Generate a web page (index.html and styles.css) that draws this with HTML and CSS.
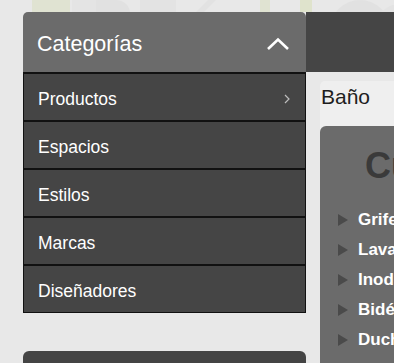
FILE: index.html
```html
<!DOCTYPE html>
<html lang="es">
<head>
<meta charset="utf-8">
<title>Categorías</title>
<link rel="stylesheet" href="styles.css">
</head>
<body>
<div class="banner">
  <svg class="banner-art" width="394" height="12" viewBox="0 0 394 12" aria-hidden="true">
    <rect x="32" y="0" width="38" height="12" fill="#e0e3d2"/>
    <rect x="72" y="0" width="24" height="12" fill="#e4e4e4"/>
    <path d="M96 0 h20 a14 14 0 0 1 14 12 h-34z" fill="#e1e1e1"/>
    <rect x="140" y="0" width="36" height="12" fill="#e3e3e3"/>
    <path d="M196 12 L208 0 h8 L204 12z" fill="#e2e2e2"/>
    <rect x="260" y="0" width="10" height="12" fill="#e0e3d2"/>
    <rect x="300" y="0" width="12" height="12" fill="#dfe3cc"/>
    <circle cx="360" cy="30" r="30" fill="#e1e1e1"/>
    <circle cx="400" cy="30" r="26" fill="#e3e3e3"/>
  </svg>
</div>
<div class="layout">
  <aside class="sidebar">
    <section class="cat-panel">
      <header class="cat-header">
        <span class="cat-title">Categorías</span>
        <svg class="chev-up" width="24" height="14" viewBox="0 0 24 14" aria-hidden="true">
          <path d="M2 12 L12 2.5 L22 12" fill="none" stroke="#fff" stroke-width="2.6"/>
        </svg>
      </header>
      <ul class="cat-list">
        <li class="cat-item"><span>Productos</span>
          <svg class="chev-right" width="6" height="10" viewBox="0 0 6 10" aria-hidden="true"><path d="M1 1 L5 5 L1 9" fill="none" stroke="#bdbdbd" stroke-width="1.2"/></svg>
        </li>
        <li class="cat-item"><span>Espacios</span></li>
        <li class="cat-item"><span>Estilos</span></li>
        <li class="cat-item"><span>Marcas</span></li>
        <li class="cat-item"><span>Diseñadores</span></li>
      </ul>
    </section>
    <section class="next-panel"></section>
  </aside>
  <main class="main">
    <div class="topbar"></div>
    <div class="content">
      <div class="crumb">Baño</div>
      <div class="card">
        <h2 class="card-title">Cuarto de baño</h2>
        <ul class="card-list">
          <li>Grifería</li>
          <li>Lavabos</li>
          <li>Inodoros</li>
          <li>Bidés</li>
          <li>Duchas</li>
        </ul>
      </div>
    </div>
  </main>
</div>
</body>
</html>
```
FILE: styles.css
```css
html, body {
  margin: 0;
  padding: 0;
}
body {
  background: #e8e8e8;
  font-family: "Liberation Sans", Arial, sans-serif;
  width: 394px;
  height: 363px;
  overflow: hidden;
}
.banner {
  height: 12px;
  overflow: hidden;
}
.banner-art {
  display: block;
}
.layout {
  display: flex;
  align-items: flex-start;
  height: 351px;
  overflow: hidden;
}
.sidebar {
  margin-left: 23px;
  width: 283px;
  flex: none;
  display: flex;
  flex-direction: column;
  gap: 38px;
}
.cat-panel {
  display: flex;
  flex-direction: column;
}
.cat-header {
  height: 60px;
  background: #6b6b6b;
  border-radius: 5px 5px 0 0;
  display: flex;
  align-items: center;
  justify-content: space-between;
  padding: 4px 16px 0 14px;
  box-sizing: border-box;
}
.cat-title {
  color: #fff;
  font-size: 21.5px;
}
.chev-up {
  display: block;
  margin-top: -1px;
}
.cat-list {
  list-style: none;
  margin: 0;
  padding: 0;
  background: #111;
  border: 1px solid #111;
  border-top-width: 2px;
  display: flex;
  flex-direction: column;
  gap: 2px;
}
.cat-item {
  height: 46px;
  box-sizing: border-box;
  background: #454545;
  color: #fff;
  font-size: 17.5px;
  display: flex;
  align-items: center;
  justify-content: space-between;
  padding: 4px 15px 0 14px;
}
.chev-right {
  display: block;
  margin-top: -1px;
}
.next-panel {
  height: 40px;
  background: #444;
  border-radius: 6px 6px 0 0;
}
.main {
  flex: 1;
  min-width: 0;
  display: flex;
  flex-direction: column;
}
.topbar {
  height: 60px;
  background: #454545;
}
.content {
  margin: 9px 0 0 14px;
  background: #efefef;
  border-radius: 5px 0 0 0;
  white-space: nowrap;
  overflow: hidden;
}
.crumb {
  height: 45px;
  font-size: 21px;
  color: #1e1e1e;
  line-height: 32px;
  padding-left: 1px;
}
.card {
  background: #6b6b6b;
  border-radius: 6px 0 0 0;
  padding: 20px 0 40px 18px;
  height: 300px;
}
.card-title {
  margin: 0 0 25px 27px;
  font-size: 36px;
  font-weight: bold;
  color: #3a3a3a;
  line-height: 40px;
}
.card-list {
  list-style: none;
  margin: 0;
  padding: 0;
  display: flex;
  flex-direction: column;
  gap: 12px;
}
.card-list li {
  color: #fff;
  font-size: 17px;
  font-weight: bold;
  line-height: 18px;
  display: flex;
  align-items: center;
  gap: 10px;
}
.card-list li::before {
  content: "";
  width: 0;
  height: 0;
  border-left: 10px solid #4a4a4a;
  border-top: 6px solid transparent;
  border-bottom: 6px solid transparent;
}
```
